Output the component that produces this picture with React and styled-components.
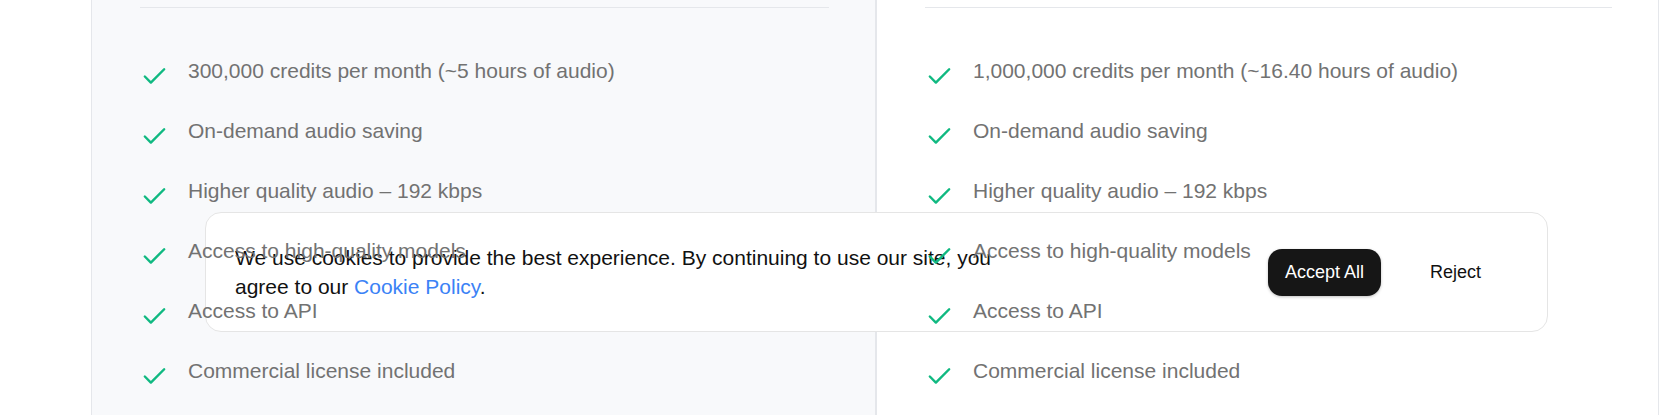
import React from 'react';
import styled, { createGlobalStyle } from 'styled-components';
import { Check } from 'lucide-react';

const GlobalStyle = createGlobalStyle`
  html, body {
    margin: 0;
    padding: 0;
    background: #ffffff;
    overflow: hidden;
  }
  body {
    font-family: "Liberation Sans", Arial, sans-serif;
  }
`;

const Page = styled.div`
  position: relative;
  display: grid;
  grid-template-columns: 785px 783px;
  padding-left: 91px;
  height: 415px;
`;

/* top edge of the cards is outside the shot, so no top border */
const Card = styled.section`
  background: ${props => (props.muted ? '#f8f9fb' : '#ffffff')};
  border: 1px solid #e5e7eb;
  border-top: none;
  padding: 7px 46px 0 48px;
  min-height: 430px;
`;

const Divider = styled.div`
  height: 1px;
  background: #e5e7eb;
`;

const FeatureList = styled.ul`
  position: relative;
  z-index: 2;
  list-style: none;
  margin: 48px 0 0;
  padding: 0;
  display: flex;
  flex-direction: column;
  gap: 25px;
`;

const Feature = styled.li`
  display: flex;
  align-items: flex-start;
  gap: 19px;
  font-size: 21px;
  line-height: 30px;
  color: #727272;
`;

const Tick = styled(Check)`
  flex-shrink: 0;
  margin-top: 6px;
  color: #10b981;
`;

const CookieBanner = styled.div`
  position: absolute;
  z-index: 1;
  left: 205px;
  top: 212px;
  width: 1343px;
  height: 120px;
  box-sizing: border-box;
  display: flex;
  align-items: center;
  padding: 0 49px 0 29px;
  background: #ffffff;
  border: 1px solid #e5e5e5;
  border-radius: 16px;
`;

const CookieText = styled.p`
  margin: 0;
  max-width: 780px;
  font-size: 21px;
  line-height: 29.4px;
  color: #111111;
`;

const PolicyLink = styled.a`
  color: #3b82f6;
  text-decoration: none;
`;

const Actions = styled.div`
  margin-left: auto;
  display: flex;
  align-items: center;
  gap: 32px;
`;

const Button = styled.button`
  font-family: "Liberation Sans", Arial, sans-serif;
  font-size: 18px;
  line-height: 27px;
  padding: 10px 17px;
  border: none;
  border-radius: 14px;
  cursor: pointer;
  background: ${props => (props.primary ? '#161616' : 'transparent')};
  color: ${props => (props.primary ? '#ffffff' : '#111111')};
  box-shadow: ${props => (props.primary ? '0 1px 3px rgba(0, 0, 0, 0.25)' : 'none')};
`;

const plans = [
  {
    muted: true,
    features: [
      '300,000 credits per month (~5 hours of audio)',
      'On-demand audio saving',
      'Higher quality audio – 192 kbps',
      'Access to high-quality models',
      'Access to API',
      'Commercial license included',
    ],
  },
  {
    muted: false,
    features: [
      '1,000,000 credits per month (~16.40 hours of audio)',
      'On-demand audio saving',
      'Higher quality audio – 192 kbps',
      'Access to high-quality models',
      'Access to API',
      'Commercial license included',
    ],
  },
];

export default function App() {
  return (
    <>
      <GlobalStyle />
      <Page>
        {plans.map((plan, i) => (
          <Card key={i} muted={plan.muted}>
            <Divider />
            <FeatureList>
              {plan.features.map(f => (
                <Feature key={f}>
                  <Tick size={29} strokeWidth={2} />
                  <span>{f}</span>
                </Feature>
              ))}
            </FeatureList>
          </Card>
        ))}

        <CookieBanner>
          <CookieText>
            We use cookies to provide the best experience. By continuing to use our site, you
            agree to our <PolicyLink href="#">Cookie Policy</PolicyLink>.
          </CookieText>
          <Actions>
            <Button primary>Accept All</Button>
            <Button>Reject</Button>
          </Actions>
        </CookieBanner>
      </Page>
    </>
  );
}
